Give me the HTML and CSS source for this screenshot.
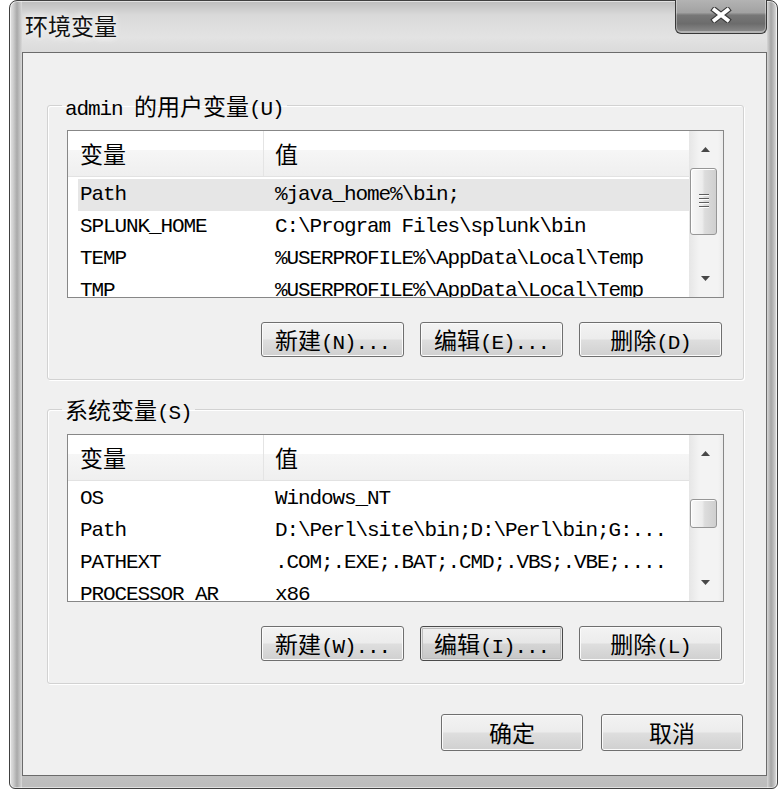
FILE: index.html
```html
<!DOCTYPE html>
<html lang="zh-CN">
<head>
<meta charset="utf-8">
<title>环境变量</title>
<link rel="stylesheet" href="styles.css">
</head>
<body>
<div class="window">
  <div class="titlebar">
    <span class="title zh">环境变量</span>
    <button class="close" aria-label="关闭">
      <svg width="22" height="16" viewBox="0 0 22 16"><path d="M4.5 3 L17.5 13 M17.5 3 L4.5 13" stroke="#3a3a3a" stroke-width="6" stroke-linecap="square"/><path d="M4.5 3 L17.5 13 M17.5 3 L4.5 13" stroke="#fff" stroke-width="3.8" stroke-linecap="square"/></svg>
    </button>
  </div>
  <div class="client">
    <fieldset class="group">
      <legend>admin <span class="zh">的用户变量</span>(U)</legend>
      <div class="list">
        <div class="list-body">
          <div class="list-head"><div class="h1 zh">变量</div><div class="h2 zh">值</div></div>
          <div class="rows">
            <div class="row selected"><span class="c1">Path</span><span class="c2">%java_home%\bin;</span></div>
            <div class="row"><span class="c1">SPLUNK_HOME</span><span class="c2">C:\Program Files\splunk\bin</span></div>
            <div class="row"><span class="c1">TEMP</span><span class="c2">%USERPROFILE%\AppData\Local\Temp</span></div>
            <div class="row"><span class="c1">TMP</span><span class="c2">%USERPROFILE%\AppData\Local\Temp</span></div>
          </div>
        </div>
        <div class="scrollbar">
          <div class="sb-btn"><svg width="9" height="5" viewBox="0 0 9 5"><path d="M4.5 0 L9 5 L0 5Z" fill="#474747"/></svg></div>
          <div class="sb-track"><div class="thumb thumb-user"><span class="grip"></span></div></div>
          <div class="sb-btn"><svg width="9" height="5" viewBox="0 0 9 5"><path d="M0 0 L9 0 L4.5 5Z" fill="#474747"/></svg></div>
        </div>
      </div>
      <div class="btn-row">
        <button class="btn"><span class="zh">新建</span>(N)...</button>
        <button class="btn"><span class="zh">编辑</span>(E)...</button>
        <button class="btn"><span class="zh">删除</span>(D)</button>
      </div>
    </fieldset>

    <fieldset class="group">
      <legend><span class="zh">系统变量</span>(S)</legend>
      <div class="list">
        <div class="list-body">
          <div class="list-head"><div class="h1 zh">变量</div><div class="h2 zh">值</div></div>
          <div class="rows">
            <div class="row"><span class="c1">OS</span><span class="c2">Windows_NT</span></div>
            <div class="row"><span class="c1">Path</span><span class="c2">D:\Perl\site\bin;D:\Perl\bin;G:...</span></div>
            <div class="row"><span class="c1">PATHEXT</span><span class="c2">.COM;.EXE;.BAT;.CMD;.VBS;.VBE;....</span></div>
            <div class="row"><span class="c1">PROCESSOR_AR</span><span class="c2">x86</span></div>
          </div>
        </div>
        <div class="scrollbar">
          <div class="sb-btn"><svg width="9" height="5" viewBox="0 0 9 5"><path d="M4.5 0 L9 5 L0 5Z" fill="#474747"/></svg></div>
          <div class="sb-track"><div class="thumb thumb-sys"></div></div>
          <div class="sb-btn"><svg width="9" height="5" viewBox="0 0 9 5"><path d="M0 0 L9 0 L4.5 5Z" fill="#474747"/></svg></div>
        </div>
      </div>
      <div class="btn-row">
        <button class="btn"><span class="zh">新建</span>(W)...</button>
        <button class="btn focused"><span class="zh">编辑</span>(I)...</button>
        <button class="btn"><span class="zh">删除</span>(L)</button>
      </div>
    </fieldset>

    <div class="footer">
      <button class="btn big"><span class="zh">确定</span></button>
      <button class="btn big"><span class="zh">取消</span></button>
    </div>
  </div>
</div>
</body>
</html>
```
FILE: styles.css
```css
* { box-sizing: border-box; }

html, body {
  margin: 0;
  padding: 0;
  background: #fff;
}

body {
  font-family: "Liberation Mono", "Noto Sans CJK SC", monospace;
  font-size: 21px;
  letter-spacing: -1.1px;
  color: #000;
}

.zh {
  font-family: "Noto Sans CJK SC", sans-serif;
  font-size: 23px;
  letter-spacing: 0;
}

.window {
  margin-left: 9px;
  width: 769px;
  height: 789px;
  display: flex;
  flex-direction: column;
  border: 1px solid #404040;
  border-radius: 8px 8px 6px 6px;
  padding: 0 10px 12px 12px;
  box-shadow: inset 0 0 0 1px rgba(255, 255, 255, 0.55);
  background:
    linear-gradient(to right, #e4e4e4 0, #d0d0d0 3px, #a9a9a9 7px, #c4c4c4 10px, #dadada 12px) left top / 12px 100% no-repeat,
    linear-gradient(to left, #e4e4e4 0, #bfbfbf 3px, #a5a5a5 6px, #d6d6d6 10px) right top / 10px 100% no-repeat,
    linear-gradient(to bottom, #bdbdbd 0, #d9d9d9 14px, #e3e3e3 36px, #dadada 52px, #d2d2d2 90%, #bcbcbc 100%);
}

.titlebar {
  height: 51px;
  display: flex;
  justify-content: space-between;
  align-items: flex-start;
}

.title {
  padding: 9px 0 0 3px;
  line-height: 30px;
  color: #111;
  text-shadow: 0 0 6px rgba(255, 255, 255, 0.95), 0 0 10px rgba(255, 255, 255, 0.8);
}

.close {
  margin-top: -1px;
  width: 92px;
  height: 34px;
  padding: 0 0 3px;
  display: flex;
  align-items: center;
  justify-content: center;
  border: 1px solid #393939;
  border-top: none;
  border-radius: 0 0 6px 6px;
  background: linear-gradient(to bottom, #b3b3b3 0%, #a2a2a2 38%, #777 46%, #6c6c6c 72%, #8f8f8f 100%);
  box-shadow: inset 0 -1px 0 1px rgba(255, 255, 255, 0.35);
}

.client {
  flex: 1;
  display: flex;
  flex-direction: column;
  border: 1px solid #6b6b6b;
  background: #f0f0f0;
  padding: 39px 22px 24px 24px;
}

.group {
  margin: 0;
  min-width: 0;
  padding: 12px 19px 22px;
  border: 1px solid #d2d2d2;
  border-radius: 3px;
  box-shadow: inset 1px 1px 0 #fff, 1px 1px 0 #fff;
}

.group + .group { margin-top: 16px; }

.group legend {
  height: 26px;
  line-height: 26px;
  padding: 0 3px;
  margin-left: -5px;
  white-space: nowrap;
}

.list {
  display: flex;
  height: 168px;
  border: 1px solid #878787;
  background: #fff;
}

.list-body {
  flex: 1;
  overflow: hidden;
}

.list-head {
  display: flex;
  height: 46px;
  border-bottom: 1px solid #e2e2e2;
  background: linear-gradient(to bottom, #fff 0, #fff 42%, #f6f6f6 43%, #efefef 100%);
}

.list-head .h1 {
  width: 196px;
  padding-left: 12px;
  line-height: 45px;
  border-right: 1px solid #e4e4e4;
}

.list-head .h2 {
  padding-left: 11px;
  line-height: 45px;
}

.rows { padding-top: 2px; }

.row {
  display: flex;
  height: 32px;
  line-height: 32px;
  margin-left: 10px;
  white-space: nowrap;
}

.row.selected { background: #e6e6e6; }

.row .c1 {
  width: 186px;
  padding-left: 2px;
}

.row .c2 { padding-left: 11px; }

.scrollbar {
  width: 34px;
  display: flex;
  flex-direction: column;
  background: linear-gradient(to right, #e6e6e6 0, #f3f3f3 30%, #f3f3f3 85%, #ebebeb 100%);
}

.sb-btn {
  height: 37px;
  display: flex;
  align-items: center;
  justify-content: center;
  padding-right: 2px;
}

.sb-track { flex: 1; }

.thumb {
  width: 27px;
  margin-left: 1px;
  display: flex;
  align-items: center;
  justify-content: center;
  border: 1px solid #969696;
  border-radius: 3px;
  background: linear-gradient(to right, #f8f8f8 0, #ececec 45%, #dcdcdc 55%, #cfcfcf 100%);
  box-shadow: inset 1px 1px 0 #fff;
}

.thumb-user { height: 67px; }
.thumb-sys { height: 29px; margin-top: 27px; }

.grip {
  width: 10px;
  height: 15px;
  background: repeating-linear-gradient(to bottom, #5e5e5e 0, #5e5e5e 1px, #fdfdfd 1px, #fdfdfd 2px, transparent 2px, transparent 4px);
}

.btn-row {
  display: flex;
  justify-content: flex-end;
  gap: 16px;
  margin-top: 24px;
  padding-right: 2px;
}

.btn {
  width: 143px;
  height: 35px;
  padding: 0;
  border: 1px solid #6f6f6f;
  border-radius: 3px;
  font: inherit;
  letter-spacing: inherit;
  line-height: 33px;
  color: #000;
  white-space: nowrap;
  background: linear-gradient(to bottom, #f3f3f3 0%, #ececec 48%, #dedede 52%, #d0d0d0 100%);
  box-shadow: inset 0 0 0 1px #fbfbfb;
}

.btn.focused {
  border-color: #4a4a4a;
  background: linear-gradient(to bottom, #f0f0f0 0%, #e6e6e6 48%, #d5d5d5 52%, #c6c6c6 100%);
  box-shadow: inset 0 0 0 1px #e8e8e8, inset 0 0 0 2px #bdbdbd;
}

.footer {
  margin-top: auto;
  display: flex;
  justify-content: flex-end;
  gap: 18px;
  padding-right: 1px;
}

.btn.big {
  width: 142px;
  height: 37px;
  line-height: 35px;
}
```
